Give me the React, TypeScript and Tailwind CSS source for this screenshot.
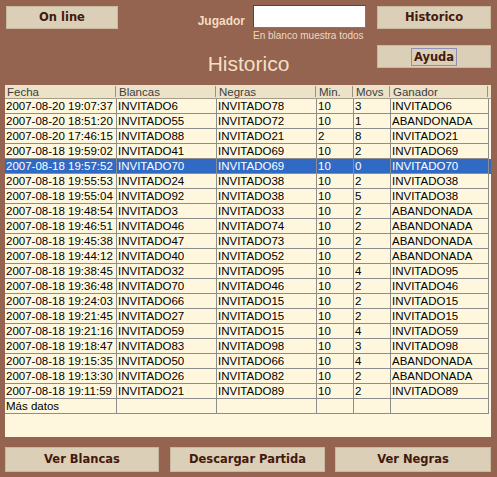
import React from 'react';

type Partida = [string, string, string, string, string, string];

const partidas: Partida[] = [
  ['2007-08-20 19:07:37', 'INVITADO6', 'INVITADO78', '10', '3', 'INVITADO6'],
  ['2007-08-20 18:51:20', 'INVITADO55', 'INVITADO72', '10', '1', 'ABANDONADA'],
  ['2007-08-20 17:46:15', 'INVITADO88', 'INVITADO21', '2', '8', 'INVITADO21'],
  ['2007-08-18 19:59:02', 'INVITADO41', 'INVITADO69', '10', '2', 'INVITADO69'],
  ['2007-08-18 19:57:52', 'INVITADO70', 'INVITADO69', '10', '0', 'INVITADO70'],
  ['2007-08-18 19:55:53', 'INVITADO24', 'INVITADO38', '10', '2', 'INVITADO38'],
  ['2007-08-18 19:55:04', 'INVITADO92', 'INVITADO38', '10', '5', 'INVITADO38'],
  ['2007-08-18 19:48:54', 'INVITADO3', 'INVITADO33', '10', '2', 'ABANDONADA'],
  ['2007-08-18 19:46:51', 'INVITADO46', 'INVITADO74', '10', '2', 'ABANDONADA'],
  ['2007-08-18 19:45:38', 'INVITADO47', 'INVITADO73', '10', '2', 'ABANDONADA'],
  ['2007-08-18 19:44:12', 'INVITADO40', 'INVITADO52', '10', '2', 'ABANDONADA'],
  ['2007-08-18 19:38:45', 'INVITADO32', 'INVITADO95', '10', '4', 'INVITADO95'],
  ['2007-08-18 19:36:48', 'INVITADO70', 'INVITADO46', '10', '2', 'INVITADO46'],
  ['2007-08-18 19:24:03', 'INVITADO66', 'INVITADO15', '10', '2', 'INVITADO15'],
  ['2007-08-18 19:21:45', 'INVITADO27', 'INVITADO15', '10', '2', 'INVITADO15'],
  ['2007-08-18 19:21:16', 'INVITADO59', 'INVITADO15', '10', '4', 'INVITADO59'],
  ['2007-08-18 19:18:47', 'INVITADO83', 'INVITADO98', '10', '3', 'INVITADO98'],
  ['2007-08-18 19:15:35', 'INVITADO50', 'INVITADO66', '10', '4', 'ABANDONADA'],
  ['2007-08-18 19:13:30', 'INVITADO26', 'INVITADO82', '10', '2', 'ABANDONADA'],
  ['2007-08-18 19:11:59', 'INVITADO21', 'INVITADO89', '10', '2', 'INVITADO89'],
];

const columnas = ['Fecha', 'Blancas', 'Negras', 'Min.', 'Movs', 'Ganador'];
const SELECTED = 4;

const Boton: React.FC<{ className?: string; children: React.ReactNode }> = ({ className = '', children }) => (
  <button
    className={`flex items-center justify-center bg-[#dccfb7] border border-[#c9b99e] text-[#44190d] font-bold text-[11.5px] font-['DejaVu_Sans',Verdana,sans-serif] ${className}`}
  >
    {children}
  </button>
);

const App: React.FC = () => {
  return (
    <div className="w-[497px] h-[477px] bg-[#946450] flex flex-col px-[5px] pt-[5px] font-['Liberation_Sans',Arial,sans-serif]">
      {/* fila superior */}
      <div className="flex items-start h-[40px]">
        <Boton className="mt-[1px] ml-[1px] w-[112px] h-[23px]">On line</Boton>
        <span className="w-[127px] text-right mt-[9px] text-[12px] leading-[14px] font-bold text-[#f3dcc2]">
          Jugador
        </span>
        <div className="ml-[8px] w-[113px] flex flex-col">
          <div className="h-[23px] bg-white border border-[#7b7b7b] border-t-[#4a4a4a] border-l-[#4a4a4a]" />
          <span className="mt-[2px] text-[10px] leading-[11px] text-[#f0d8c0] whitespace-nowrap">
            En blanco muestra todos
          </span>
        </div>
        <Boton className="ml-[11px] mt-[1px] w-[114px] h-[23px]">Historico</Boton>
      </div>

      {/* titulo */}
      <div className="flex items-start h-[40px]">
        <div className="w-[115px]" />
        <h1 className="flex-1 text-center text-[21px] leading-[24px] mt-[7px] text-[#f5dfc6]">Historico</h1>
        <Boton className="w-[114px] h-[23px] mr-[1px]">
          <span className="border border-[#8f8fb5] px-[2px] leading-[16px]">Ayuda</span>
        </Boton>
      </div>

      {/* tabla */}
      <div className="w-[486px] h-[352px] bg-[#fef7dd] text-[11.5px] leading-[14px]">
        <div className="grid grid-cols-[112px_100px_100px_37px_37px_98px] h-[14px] bg-[#ebe2c8] border-b border-[#a49c88] text-[#3e3e3e]">
          {columnas.map((c) => (
            <div key={c} className="flex items-center pl-[2px] overflow-hidden whitespace-nowrap">
              <span className="flex-1">{c}</span>
              <span className="w-[1px] h-[11px] bg-[#9a927e] mr-[1px]" />
            </div>
          ))}
        </div>
        {partidas.map((p, i) => (
          <div
            key={i}
            className={`grid grid-cols-[112px_100px_100px_37px_37px_98px] h-[15px] ${
              i === SELECTED ? 'bg-[#316ac5] text-white' : 'text-black'
            }`}
          >
            {p.map((v, j) => (
              <div
                key={j}
                className="pl-[1px] border-r border-b border-[#8d8d8d] overflow-hidden whitespace-nowrap leading-[14px]"
              >
                {v}
              </div>
            ))}
          </div>
        ))}
        <div className="grid grid-cols-[112px_100px_100px_37px_37px_98px] h-[15px] text-black">
          {['Más datos', '', '', '', '', ''].map((v, j) => (
            <div key={j} className="pl-[1px] border-r border-b border-[#8d8d8d] overflow-hidden whitespace-nowrap leading-[14px]">
              {v}
            </div>
          ))}
        </div>
      </div>

      {/* botones inferiores */}
      <div className="flex mt-[10px]">
        <Boton className="w-[154px] h-[25px]">Ver Blancas</Boton>
        <Boton className="ml-[11px] w-[155px] h-[25px]">Descargar Partida</Boton>
        <Boton className="ml-[10px] w-[156px] h-[25px]">Ver Negras</Boton>
      </div>
    </div>
  );
};

export default App;
